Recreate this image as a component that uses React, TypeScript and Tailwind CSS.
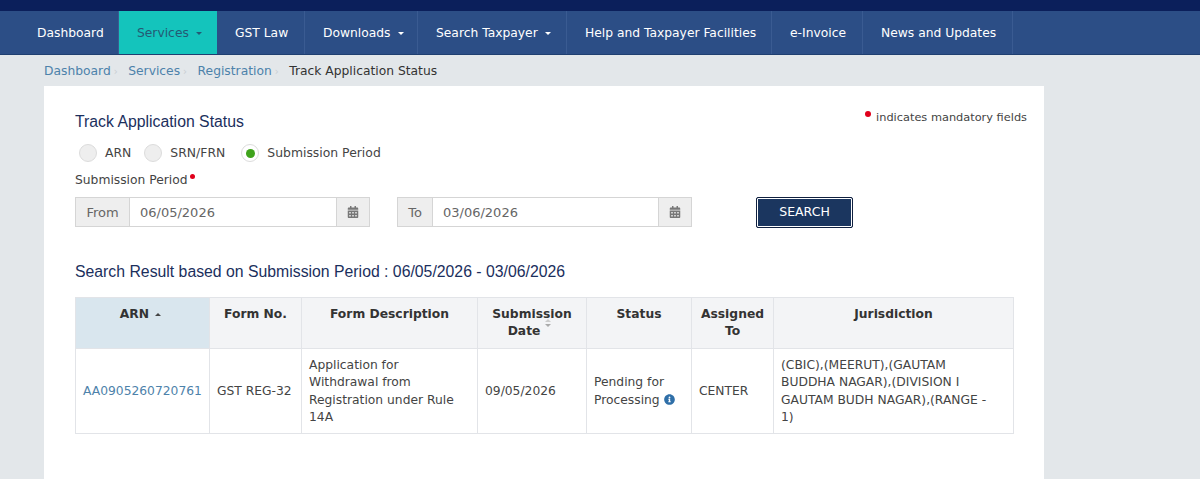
import { FaCalendarAlt, FaInfoCircle } from "react-icons/fa";

const nav = [
  { label: "Dashboard", w: "w-[119px]", pl: "pl-[37px]" },
  { label: "Services", w: "w-[98px]", caret: true, active: true, pl: "pl-[18px]" },
  { label: "GST Law", w: "w-[88px]", pl: "pl-[18px]" },
  { label: "Downloads", w: "w-[113px]", caret: true, pl: "pl-[18px]" },
  { label: "Search Taxpayer", w: "w-[149px]", caret: true, pl: "pl-[18px]" },
  { label: "Help and Taxpayer Facilities", w: "w-[205px]", pl: "pl-[18px]" },
  { label: "e-Invoice", w: "w-[91px]", pl: "pl-[18px]" },
  { label: "News and Updates", w: "w-[150px]", pl: "pl-[18px]" },
];

function Caret({ className }: { className: string }) {
  return <span className={`ml-[7px] inline-block h-0 w-0 border-x-[3px] border-t-[3px] border-x-transparent align-middle ${className}`} />;
}

function Radio({ label, checked }: { label: string; checked?: boolean }) {
  return (
    <label className="flex items-center">
      <span className={`flex h-[18px] w-[18px] items-center justify-center rounded-full border border-[#dcdcdc] ${checked ? "bg-white" : "bg-[#eeeeee]"}`}>
        {checked && <span className="h-[9px] w-[9px] rounded-full bg-[#3fa31c]" />}
      </span>
      <span className="ml-[8px] text-[12.4px] text-[#444]">{label}</span>
    </label>
  );
}

function DateInput({ label, value, addon }: { label: string; value: string; addon: string }) {
  return (
    <div className="flex h-[30px] w-[295px] border border-[#d5d5d5] text-[13px]">
      <span className={`flex ${addon} items-center justify-center border-r border-[#d5d5d5] bg-[#eeeeee] pt-[1px] text-[#666]`}>{label}</span>
      <span className="flex flex-1 items-center pt-[1px] pl-[10px] text-[#666]">{value}</span>
      <span className="flex w-[33px] items-center justify-center border-l border-[#d5d5d5] bg-[#eeeeee] text-[#777]">
        <FaCalendarAlt size={12} />
      </span>
    </div>
  );
}

const headCls = "border border-[#e2e4e8] bg-[#f3f4f6] px-[7px] pt-[8px] pb-[4px] align-top text-center font-bold text-[#333] leading-[17.5px]";
const cellCls = "border border-[#e2e4e8] px-[7px] pt-[2px] align-middle text-[#444] leading-[17.5px]";

function Sep() {
  return <span className="w-[17.5px] pl-[3px] text-[10px] text-[#c9ced3]">›</span>;
}

export default function App() {
  return (
    <div className="h-[479px] overflow-hidden bg-[#e3e7ea] font-['DejaVu_Sans',sans-serif]">
      <div className="h-[11px] bg-[#0b1f5b]" />
      <nav className="flex h-[44px] border-b border-[#1f3f70] bg-[#2c4e86] text-[12.3px] text-white">
        {nav.map((n) => (
          <div
            key={n.label}
            className={`flex ${n.w} ${n.pl} items-center whitespace-nowrap pt-[2px] ${n.active ? "bg-[#14c4bc] text-[#245a74]" : "border-r border-[#3a5b92]"}`}
          >
            {n.label}
            {n.caret && <Caret className={n.active ? "border-t-[#245a74]" : "border-t-white"} />}
          </div>
        ))}
      </nav>
      <div className="flex h-[31px] items-center pt-[1px] pl-[44px] text-[12.3px]">
        <span className="text-[#4d82aa]">Dashboard</span>
        <Sep />
        <span className="text-[#4d82aa]">Services</span>
        <Sep />
        <span className="text-[#4d82aa]">Registration</span>
        <Sep />
        <span className="text-[#333]">Track Application Status</span>
      </div>
      <main className="relative mx-[44px] h-[400px] w-[1000px] bg-white px-[31px] pt-[27px]">
        <div className="absolute top-[23px] right-[17px] flex items-center text-[11.35px] text-[#444]">
          <span className="mr-[5px] mb-[7px] h-[6px] w-[6px] rounded-full bg-[#e0001b]" />
          indicates mandatory fields
        </div>
        <h1 className="font-['Liberation_Sans',sans-serif] text-[15.8px] leading-[18px] text-[#1b2f5d]">Track Application Status</h1>
        <div className="mt-[13px] flex gap-[13px] pl-[4px]">
          <Radio label="ARN" />
          <div className="flex gap-[14px]">
            <Radio label="SRN/FRN" />
            <div className="pl-[2px]">
              <Radio label="Submission Period" checked />
            </div>
          </div>
        </div>
        <div className="mt-[8px] flex text-[12.3px] leading-[18px] text-[#444]">
          Submission Period
          <span className="mt-[3px] ml-[2px] h-[5px] w-[5px] rounded-full bg-[#e0001b]" />
        </div>
        <div className="mt-[8px] flex items-center">
          <DateInput label="From" value="06/05/2026" addon="w-[54px]" />
          <div className="ml-[27px]">
            <DateInput label="To" value="03/06/2026" addon="w-[35px]" />
          </div>
          <button className="ml-[64px] h-[31px] w-[97px] rounded-[2px] border border-[#10203f] bg-[#1b365f] pt-[1px] text-[12.5px] text-white shadow-[inset_0_0_0_1px_#fff]">
            SEARCH
          </button>
        </div>
        <h2 className="mt-[35px] font-['Liberation_Sans',sans-serif] text-[15.8px] leading-[18px] text-[#1b2f5d]">
          Search Result based on Submission Period : 06/05/2026 - 03/06/2026
        </h2>
        <table className="mt-[16px] w-[938px] table-fixed border-collapse text-[12.3px]">
          <colgroup>
            <col className="w-[134px]" />
            <col className="w-[92px]" />
            <col className="w-[176px]" />
            <col className="w-[109px]" />
            <col className="w-[105px]" />
            <col className="w-[82px]" />
            <col className="w-[240px]" />
          </colgroup>
          <thead>
            <tr className="h-[51px]">
              <th className={`${headCls} !pr-[11px] !bg-[#d9e6ee]`}>
                ARN <span className="ml-[2px] inline-block h-0 w-0 border-x-[3px] border-b-[3px] border-x-transparent border-b-[#444] align-middle" />
              </th>
              <th className={headCls}>Form No.</th>
              <th className={headCls}>Form Description</th>
              <th className={`${headCls} relative`}>
                Submission Date<span className="inline-block w-[16px]" />
                <span className="absolute top-[21px] right-[35px] h-0 w-0 border-x-[3px] border-b-[3px] border-x-transparent border-b-[#ccc]" />
                <span className="absolute top-[26px] right-[35px] h-0 w-0 border-x-[3px] border-t-[3px] border-x-transparent border-t-[#aaa]" />
              </th>
              <th className={headCls}>Status</th>
              <th className={headCls}>Assigned To</th>
              <th className={headCls}>Jurisdiction</th>
            </tr>
          </thead>
          <tbody>
            <tr className="h-[85px]">
              <td className={`${cellCls} !text-[#4d82aa]`}>AA0905260720761</td>
              <td className={cellCls}>GST REG-32</td>
              <td className={cellCls}>Application for Withdrawal from Registration under Rule 14A</td>
              <td className={cellCls}>09/05/2026</td>
              <td className={cellCls}>
                Pending for Processing <FaInfoCircle className="inline align-[-1px] text-[#2f6fa8]" size={11} />
              </td>
              <td className={cellCls}>CENTER</td>
              <td className={`${cellCls} !pr-[16px]`}>(CBIC),(MEERUT),(GAUTAM BUDDHA NAGAR),(DIVISION I GAUTAM BUDH NAGAR),(RANGE - 1)</td>
            </tr>
          </tbody>
        </table>
      </main>
    </div>
  );
}
